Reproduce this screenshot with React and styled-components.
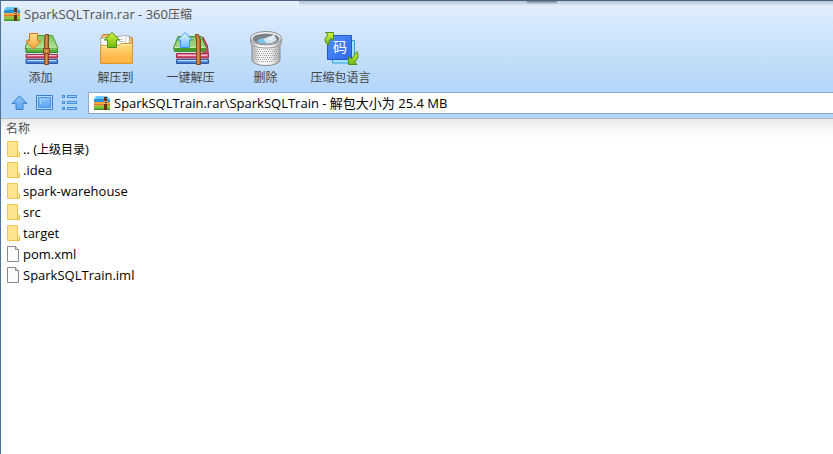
import React from 'react';
import styled, { createGlobalStyle } from 'styled-components';

const GlobalStyle = createGlobalStyle`
  * {
    box-sizing: border-box;
  }
  body {
    margin: 0;
    background: #fff;
    font-family: 'Open Sans', 'Noto Sans CJK SC', sans-serif;
    font-size: 13px;
    color: #000;
  }
`;

const Window = styled.div`
  min-height: 100vh;
  border-top: 1px solid #4b6484;
  border-left: 1px solid #4f7499;
  background: #fff;
  overflow: hidden;
`;

const Chrome = styled.header`
  background:
    linear-gradient(rgba(60, 75, 95, 0.6), transparent) 526px 0 / 30px 3px no-repeat,
    linear-gradient(rgba(110, 120, 150, 0.4), transparent) 298px 0 / 100% 5px no-repeat,
    linear-gradient(#e6effd, #d2e7fc 28px, #c3defa 58px, #b3d6fb 92px, #b3d6fb);
  border-bottom: 1px solid #b4bac4;
`;

const TitleBar = styled.div`
  display: flex;
  align-items: center;
  gap: 4px;
  height: 26px;
  padding-left: 3px;
  color: #505050;
`;

const Title = styled.h1`
  margin: 0;
  font-size: 13px;
  line-height: 16px;
  font-weight: 400;
`;

const Toolbar = styled.div`
  display: flex;
  padding: 4px 0 0 2px;
`;

const ToolButton = styled.button`
  display: flex;
  flex-direction: column;
  align-items: center;
  gap: 2px;
  width: 75px;
  padding: 0;
  border: 0;
  background: none;
  color: #444;
  font: inherit;
  font-size: 12px;
  line-height: 18px;
  white-space: nowrap;
`;

const NavBar = styled.div`
  display: flex;
  align-items: center;
  gap: 7px;
  padding: 5px 0 4px 9px;
`;

const NavButton = styled.button`
  display: flex;
  width: 18px;
  height: 18px;
  padding: 0;
  border: 0;
  background: none;
`;

const AddressBox = styled.label`
  display: flex;
  flex: 1;
  align-items: center;
  gap: 4px;
  height: 22px;
  margin-left: 3px;
  padding-left: 5px;
  border: 1px solid #8aa9cd;
  border-right: 0;
  background: #fff;
`;

const AddressInput = styled.input`
  flex: 1;
  min-width: 0;
  padding: 0;
  border: 0;
  outline: 0;
  background: none;
  color: #000;
  font: inherit;
  line-height: 18px;
`;

const FileTable = styled.table`
  width: 100%;
  border-collapse: collapse;
`;

const HeadCell = styled.th`
  height: 20px;
  padding: 0 5px;
  background: linear-gradient(#e9e9e9, #f6f6f6 8px, #fff);
  color: #505050;
  font-size: 12px;
  line-height: 18px;
  font-weight: 400;
  text-align: left;
`;

const FileCell = styled.td`
  height: 21px;
  padding: 0 5px;
`;

const FileName = styled.div`
  display: flex;
  align-items: center;
  gap: 3px;
  line-height: 21px;
`;

const Han = styled.span`
  font-size: 12px;
`;

function ArchiveIcon() {
  return (
    <svg width="16" height="14" viewBox="0 0 16 14" aria-hidden="true">
      <path d="M2 0H13L16 3V6H0V3Z" fill="#6cc8f4" />
      <path d="M0 3.5L6 2.5L16 4V6.5H0Z" fill="#2492dc" />
      <path d="M0 6H16V9.5H0Z" fill="#f8a63a" />
      <path d="M0 8H16V9.5H0Z" fill="#ea7426" />
      <path d="M0 9.5H16V13H0Z" fill="#86c63a" />
      <path d="M0 12.5H16V14H0Z" fill="#459a2a" />
      <path d="M10 1H13V14H10Z" fill="#6b3010" />
      <path d="M10 5H13.5V8H10Z" fill="#d8a674" />
      <path d="M11 6H13V7H11Z" fill="#5a2a0d" />
    </svg>
  );
}

function Gradients() {
  return (
    <svg width="0" height="0" style={{ display: 'block' }} aria-hidden="true">
      <defs>
        <linearGradient id="green" x2="0" y2="1">
          <stop offset="0" stopColor="#7fc558" />
          <stop offset="1" stopColor="#b5e39a" />
        </linearGradient>
        <linearGradient id="lime" x2="0" y2="1">
          <stop offset="0" stopColor="#d7f53b" />
          <stop offset="1" stopColor="#6cba12" />
        </linearGradient>
        <linearGradient id="pink" x2="0" y2="1">
          <stop offset="0" stopColor="#ef9aac" />
          <stop offset="1" stopColor="#b92c50" />
        </linearGradient>
        <linearGradient id="blue" x2="0" y2="1">
          <stop offset="0" stopColor="#8dbdf3" />
          <stop offset="1" stopColor="#2c65c4" />
        </linearGradient>
        <linearGradient id="orange" x2="0" y2="1">
          <stop offset="0" stopColor="#ffe08e" />
          <stop offset="1" stopColor="#ffa436" />
        </linearGradient>
        <linearGradient id="sky" x2="0" y2="1">
          <stop offset="0" stopColor="#e4f7ff" />
          <stop offset="1" stopColor="#68bdf8" />
        </linearGradient>
        <linearGradient id="belt">
          <stop offset="0" stopColor="#9a5520" />
          <stop offset=".5" stopColor="#dc9453" />
          <stop offset="1" stopColor="#9a5520" />
        </linearGradient>
        <linearGradient id="folder" x2="0" y2="1">
          <stop offset="0" stopColor="#ffe087" />
          <stop offset="1" stopColor="#fba42a" />
        </linearGradient>
        <linearGradient id="metal">
          <stop offset="0" stopColor="#b4b4b4" />
          <stop offset=".3" stopColor="#fafafa" />
          <stop offset=".7" stopColor="#f0f0f0" />
          <stop offset="1" stopColor="#a8a8a8" />
        </linearGradient>
        <linearGradient id="nav" x2="0" y2="1">
          <stop offset="0" stopColor="#8ec5fb" />
          <stop offset="1" stopColor="#5ba4f0" />
        </linearGradient>
        <linearGradient id="tile" x2="1" y2="1">
          <stop offset="0" stopColor="#5290f8" />
          <stop offset="1" stopColor="#2f68ea" />
        </linearGradient>
        <pattern id="mesh" width="2" height="4" patternUnits="userSpaceOnUse">
          <path d="M0 0H1V1H0ZM1 2H2V3H1Z" fill="#999" />
        </pattern>
      </defs>
    </svg>
  );
}

function AddIcon() {
  return (
    <svg width="36" height="36" viewBox="0 0 36 36" aria-hidden="true">
      <path d="M8 4.5H29.5L34.5 16V18H2.5V15Z" fill="url(#green)" stroke="#4c9a35" />
      <path d="M3 17.5H34.5V21.5H3Z" fill="#53ac35" stroke="#3a822b" />
      <path d="M4 18H34" stroke="#b6e59b" />
      <path d="M3 23.5H34.5V27H3Z" fill="url(#pink)" stroke="#a3324f" />
      <path d="M5 24.5H33" stroke="#f8bdca" />
      <path d="M3 28.5H34.5V32.5H3Z" fill="url(#blue)" stroke="#2b59a8" />
      <path d="M5 29.5H33" stroke="#c4e2ff" />
      <path d="M22.5 3.5H25.5V33.5H21.5V8Z" fill="url(#belt)" stroke="#84481c" />
      <path d="M20.5 17.5H26.5V22.5H20.5Z" fill="#c47c3b" stroke="#84481c" />
      <path d="M23 19H24V21H23Z" fill="#f6d39b" />
      <path d="M6.5 2.5H14.5V10H18L10.3 18L2.7 10H6.5Z" fill="url(#orange)" stroke="#d5761c" />
    </svg>
  );
}

function ExtractIcon() {
  return (
    <svg width="36" height="36" viewBox="0 0 36 36" aria-hidden="true">
      <path d="M3.5 14V5.5L5 3.5H11L13 5.5H30L34.5 7V31H3.5Z" fill="#f5bb62" stroke="#bd8436" />
      <path d="M2.5 7.5L15 5.5V18H3.5Z" fill="#fff" stroke="#a7a7a7" />
      <path d="M15 6.5L26.5 4.5L31.5 5.5L31 18H15Z" fill="#fff" stroke="#aaa" />
      <path d="M20 8.5H25M21 10.5H26M28 6L27.5 13" stroke="#c5c5c5" />
      <path d="M2.5 14.5H20L24 12.5H34.5V32.5H2.5Z" fill="url(#folder)" stroke="#dc9733" />
      <path d="M4 15.5H20.5L24.5 13.5H33.5" fill="none" stroke="#fff0ad" />
      <path d="M4 28Q20 26 33.5 20V31.5H4Z" fill="#ffc052" opacity=".6" />
      <path d="M14 1.5L21.7 9H18.5V16.5H9.5V9H6.3Z" fill="url(#lime)" stroke="#4c8f19" />
    </svg>
  );
}

function QuickExtractIcon() {
  return (
    <svg width="36" height="36" viewBox="0 0 36 36" aria-hidden="true">
      <path d="M30 6L34.5 15L35.5 24H30Z" fill="#d34964" stroke="#a3324f" />
      <path d="M3.5 22.5H35.5V27H3.5Z" fill="url(#pink)" stroke="#a3324f" />
      <path d="M5 24.5H34" stroke="#f8bdca" />
      <path d="M3.5 28.5H35.5V32.5H3.5Z" fill="url(#blue)" stroke="#2b59a8" />
      <path d="M5 29.5H34" stroke="#c4e2ff" />
      <path d="M5 5.5H28.5L33 16.5L32 20.5H1.5L0.5 17Z" fill="url(#green)" stroke="#468f31" />
      <path d="M1 17H32.5L31.5 20.5H2Z" fill="#459a2c" />
      <path d="M1.5 16.5H32.5" stroke="#c5ecac" />
      <path d="M22.5 3.5H25.5L27.5 9V33.5H23.5V9Z" fill="url(#belt)" stroke="#8a4717" />
      <path d="M12 1.5L19.5 9H16.5V16.5H7.5V9H4.5Z" fill="url(#sky)" stroke="#3d94de" />
    </svg>
  );
}

function DeleteIcon() {
  return (
    <svg width="36" height="36" viewBox="0 0 36 36" aria-hidden="true">
      <path d="M4 10V29C4 32 10 34.5 18 34.5S32 32 32 29V10Z" fill="url(#metal)" stroke="#8a8a8a" />
      <path d="M6 17Q18 20 30 17V29Q18 34 6 29Z" fill="url(#mesh)" />
      <path d="M2.5 7V11C2.5 14.5 9 17 18 17S33.5 14.5 33.5 11V7Z" fill="url(#metal)" stroke="#999" />
      <ellipse cx="18" cy="7.2" rx="15.5" ry="6.7" fill="#f8f8f8" stroke="#888" />
      <ellipse cx="18" cy="7.8" rx="13.5" ry="5.3" fill="#7b8288" />
      <path d="M9 10L13 7L17 8L19 12.5L12 12Z" fill="#75c5ed" />
      <path d="M15 8L20 6L26 4L29 9L24 12L19 12.5Z" fill="#d3e7f3" />
      <path d="M20 6L22 9L26 4" fill="none" stroke="#f3fbff" />
    </svg>
  );
}

function LanguageIcon() {
  return (
    <svg width="36" height="36" viewBox="0 0 36 36" aria-hidden="true">
      <path d="M9.5 9.5H31.5V32H9.5Z" fill="#a4e4ff" stroke="#2aa2e3" />
      <path d="M4.5 4.5H28.5V28.5H4.5Z" fill="url(#tile)" stroke="#2459cc" />
      <text x="17" y="21" textAnchor="middle" fontSize="14" fill="#fff">码</text>
      <path d="M2.5 1.5H10.5V9.5L8 7.3Q5.5 9.5 5.5 14.5Q-1.5 8.5 5 4.2Z" fill="url(#lime)" stroke="#4c8f19" />
      <path d="M34 20.5Q37 26.5 31.5 31L34 33.5H25.5V25.5L28 28Q31 25.5 31.5 24Z" fill="url(#lime)" stroke="#4c8f19" />
    </svg>
  );
}

function UpIcon() {
  return (
    <svg width="18" height="18" viewBox="0 0 18 18" aria-hidden="true">
      <path d="M9.5 1.8L17 9.5H13V15.5H6V9.5H2Z" fill="url(#nav)" stroke="#3a82cf" />
    </svg>
  );
}

function ViewIcon() {
  return (
    <svg width="18" height="18" viewBox="0 0 18 18" aria-hidden="true">
      <path d="M1.5 1.5H17.5V15.5H1.5Z" fill="#b5dafd" stroke="#397fc8" />
      <path d="M3.5 3.5H15.5V13.5H3.5Z" fill="url(#nav)" stroke="#4c94e0" />
      <path d="M5 5.5H6M5 7.5H6M5 9.5H6M7 5.5H8M9 5.5H10" stroke="#c8e5ff" />
    </svg>
  );
}

function ListIcon() {
  return (
    <svg width="18" height="18" viewBox="0 0 18 18" aria-hidden="true">
      {[1.5, 7.5, 13.5].map((y) => (
        <g key={y} fill="#9ccdfb" stroke="#4590dc">
          <rect x="2.5" y={y} width="2" height="2" />
          <rect x="7.5" y={y} width="9" height="2" />
        </g>
      ))}
    </svg>
  );
}

function FolderIcon() {
  return (
    <svg width="14" height="17" viewBox="0 0 14 17" aria-hidden="true">
      <path d="M1.5 .5H11.5V15.5H1.5Z" fill="#ffe48f" stroke="#ebc650" />
      <path d="M11.5 15.5V11.5L12.5 10.5L13.5 11.5V15.5Z" fill="#fff0b8" stroke="#e2bd45" />
    </svg>
  );
}

function DocumentIcon() {
  return (
    <svg width="14" height="17" viewBox="0 0 14 17" aria-hidden="true">
      <path d="M1.5 .5H9.5L12.5 3.5V15.5H1.5Z" fill="#fafbfc" stroke="#8b8b8b" />
      <path d="M9.5 .5V3.5H12.5" fill="#ddd" stroke="#8b8b8b" />
    </svg>
  );
}

const tools = [
  { label: '添加', Icon: AddIcon },
  { label: '解压到', Icon: ExtractIcon },
  { label: '一键解压', Icon: QuickExtractIcon },
  { label: '删除', Icon: DeleteIcon },
  { label: '压缩包语言', Icon: LanguageIcon },
];

const files = [
  { name: '.idea', folder: true },
  { name: 'spark-warehouse', folder: true },
  { name: 'src', folder: true },
  { name: 'target', folder: true },
  { name: 'pom.xml' },
  { name: 'SparkSQLTrain.iml' },
];

function App() {
  return (
    <>
      <GlobalStyle />
      <Gradients />
      <Window>
        <Chrome>
          <TitleBar>
            <ArchiveIcon />
            <Title>SparkSQLTrain.rar - 360<Han>压缩</Han></Title>
          </TitleBar>
          <Toolbar>
            {tools.map(({ label, Icon }) => (
              <ToolButton key={label} type="button">
                <Icon />
                {label}
              </ToolButton>
            ))}
          </Toolbar>
          <NavBar>
            <NavButton type="button" aria-label="向上"><UpIcon /></NavButton>
            <NavButton type="button" aria-label="视图"><ViewIcon /></NavButton>
            <NavButton type="button" aria-label="列表"><ListIcon /></NavButton>
            <AddressBox>
              <ArchiveIcon />
              <AddressInput
                aria-label="路径"
                defaultValue="SparkSQLTrain.rar\SparkSQLTrain - 解包大小为 25.4 MB"
              />
            </AddressBox>
          </NavBar>
        </Chrome>
        <FileTable>
          <thead>
            <tr>
              <HeadCell>名称</HeadCell>
            </tr>
          </thead>
          <tbody>
            <tr>
              <FileCell>
                <FileName>
                  <FolderIcon />
                  <span>.. (<Han>上级目录</Han>)</span>
                </FileName>
              </FileCell>
            </tr>
            {files.map((file) => (
              <tr key={file.name}>
                <FileCell>
                  <FileName>
                    {file.folder ? <FolderIcon /> : <DocumentIcon />}
                    <span>{file.name}</span>
                  </FileName>
                </FileCell>
              </tr>
            ))}
          </tbody>
        </FileTable>
      </Window>
    </>
  );
}

export default App;
